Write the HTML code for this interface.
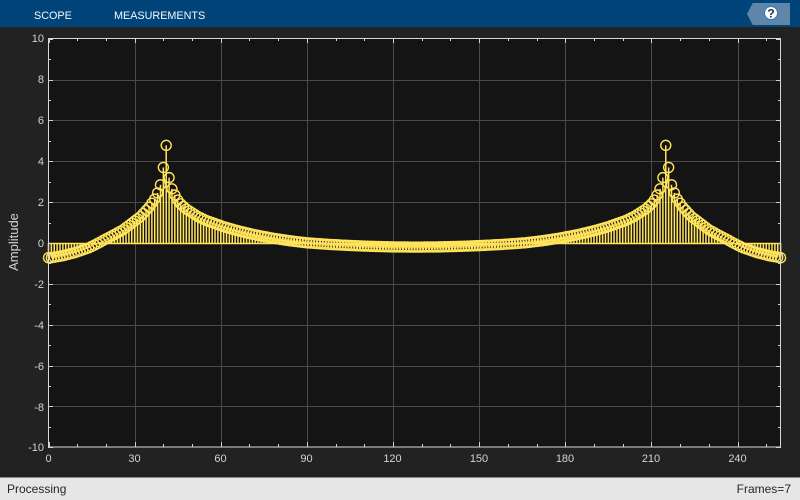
<!DOCTYPE html>
<html>
<head>
<meta charset="utf-8">
<style>
html,body{margin:0;padding:0;background:#222;width:800px;height:500px;overflow:hidden}
svg{display:block}
text{font-family:"Liberation Sans",Arial,sans-serif}
</style>
</head>
<body>
<svg id="s" xmlns="http://www.w3.org/2000/svg" width="800" height="500" viewBox="0 0 800 500">
<rect width="800" height="500" fill="#222222"/>
<rect width="800" height="27" fill="#00447a"/>
<text x="34" y="19" font-size="10.8" fill="#f6f9fc">SCOPE</text>
<text x="114" y="19" font-size="10.8" fill="#f6f9fc">MEASUREMENTS</text>
<polygon points="747,14 752.7,3 790,3 790,25 752.7,25" fill="#5f86a8"/>
<circle cx="771" cy="13" r="6.5" fill="#ffffff" stroke="#1f7fd0" stroke-width="1"/>
<text x="771" y="17.5" font-size="12" font-weight="bold" text-anchor="middle" fill="#2a2a2a">?</text>
<rect x="48" y="38" width="733" height="409" fill="#141414"/>
<g id="grid" stroke="#4a4a4a" stroke-width="1" fill="none"></g>
<g id="stems" stroke="#ffe45c" stroke-width="1.5" fill="none"></g>
<g id="ticks" stroke="#d0d0d0" stroke-width="1" fill="none"></g>
<g id="marks" stroke="#ffe45c" stroke-width="1.4" fill="none"></g>
<rect x="48.5" y="38.5" width="732" height="408.5" fill="none" stroke="#d8d8d8" stroke-width="1"/>
<g font-size="11" fill="#d4d4d4" text-anchor="end">
<text x="44" y="42">10</text><text x="44" y="83">8</text><text x="44" y="124">6</text><text x="44" y="165">4</text><text x="44" y="206">2</text><text x="44" y="247">0</text><text x="44" y="288">-2</text><text x="44" y="329">-4</text><text x="44" y="370">-6</text><text x="44" y="411">-8</text><text x="44" y="451">-10</text>
</g>
<g font-size="11" fill="#d4d4d4" text-anchor="middle">
<text x="48.5" y="462">0</text><text x="134.5" y="462">30</text><text x="220.5" y="462">60</text><text x="306.5" y="462">90</text><text x="392.5" y="462">120</text><text x="479" y="462">150</text><text x="565" y="462">180</text><text x="651" y="462">210</text><text x="737.5" y="462">240</text>
</g>
<text transform="translate(18,242) rotate(-90)" font-size="13" fill="#d4d4d4" text-anchor="middle">Amplitude</text>
<rect x="0" y="477" width="800" height="23" fill="#e6e6e6"/>
<rect x="0" y="477" width="800" height="1" fill="#8c8c8c"/>
<text x="7" y="493" font-size="12" fill="#262626">Processing</text>
<text x="791" y="493" font-size="12" fill="#262626" text-anchor="end">Frames=7</text>
</svg>
<script>
(function(){
var NS="http://www.w3.org/2000/svg";
function el(p,t,a){var e=document.createElementNS(NS,t);for(var k in a)e.setAttribute(k,a[k]);document.getElementById(p).appendChild(e);}
var X=function(k){return 48.5+k*2.871},Y=function(v){return 243-v*20.43};
var i;
for(i=30;i<=240;i+=30){var x=Math.round(X(i))+.5;el("grid","line",{x1:x,x2:x,y1:38,y2:447});}
for(i=-8;i<=8;i+=2){var y=Math.round(Y(i))+.5;el("grid","line",{x1:48,x2:781,y1:y,y2:y});}
for(i=0;i<=255;i+=10){var tx=Math.round(X(i))+.5;el("ticks","line",{x1:tx,x2:tx,y1:447,y2:i%30==0?442:444});el("ticks","line",{x1:tx,x2:tx,y1:38,y2:i%30==0?43:41});}
for(i=-10;i<=10;i++){var ty=Math.round(Y(i))+.5;var L=i%2==0?5:3;el("ticks","line",{x1:48,x2:48+L,y1:ty,y2:ty});el("ticks","line",{x1:781,x2:781-L,y1:ty,y2:ty});}
var pts=[[0,-.72],[1,-.72],[5,-.62],[9,-.48],[14,-.24],[17,-.03],[20,.2],[23,.42],[26,.65],[29,.97],[32,1.29],[35,1.75],[37,2.15],[38,2.45],[39,2.85],[40,3.7],[41,4.78],[42,3.2],[43,2.65],[44,2.35],[45,2.1],[46,1.92],[48,1.66],[50,1.48],[52,1.3],[55,1.1],[58,.95],[61,.8],[66,.6],[72,.4],[78,.24],[84,.11],[90,.01],[98,-.07],[105,-.12],[112,-.16],[120,-.19],[128,-.2]];
function val(k){if(k>128)k=256-k;for(var j=0;j<pts.length-1;j++){if(k>=pts[j][0]&&k<=pts[j+1][0]){var a=pts[j],b=pts[j+1];return a[1]+(b[1]-a[1])*(k-a[0])/(b[0]-a[0]);}}return 0;}
for(i=0;i<=255;i++){var v=val(i),px=X(i),py=Y(v);
el("stems","line",{x1:px,x2:px,y1:243,y2:py});
el("marks","circle",{cx:px,cy:py,r:5});}
el("stems","line",{x1:48,x2:781,y1:243.5,y2:243.5,"stroke-width":1.5});
})();
</script>
</body>
</html>
